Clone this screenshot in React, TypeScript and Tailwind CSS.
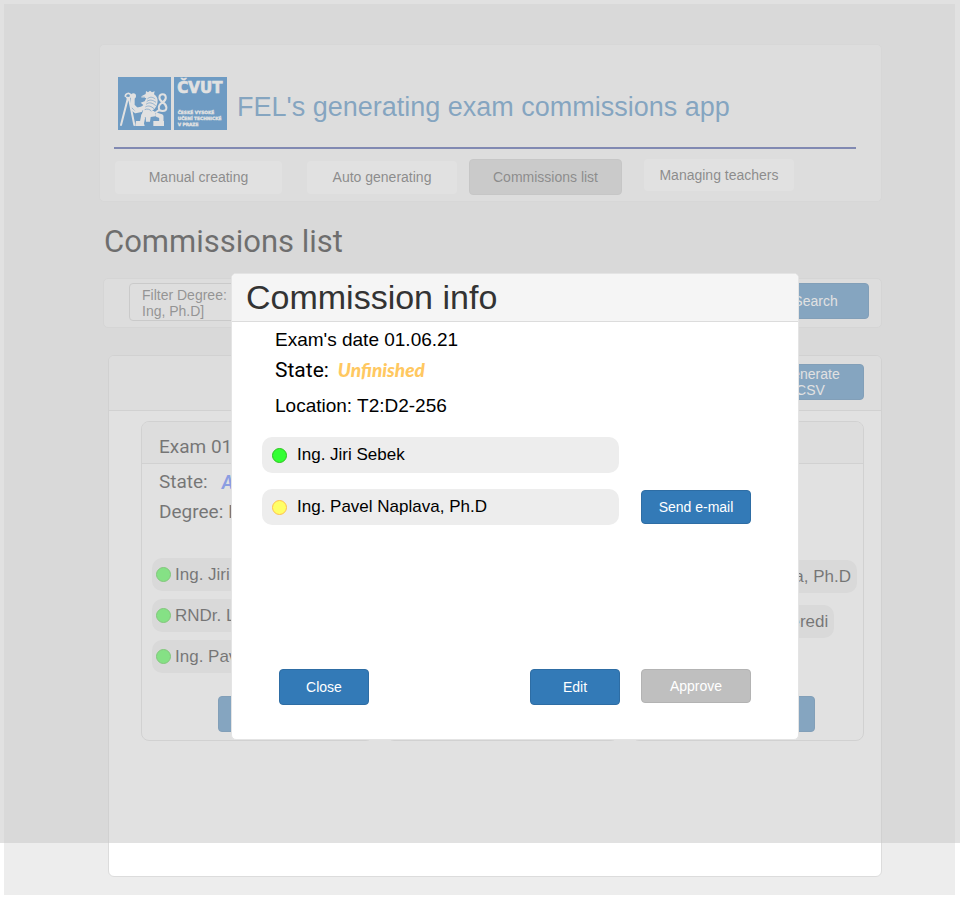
import React from "react";

const sans = "font-['Liberation_Sans',Arial,sans-serif]";
const roboto = "font-[Roboto,sans-serif]";
const blueButton = "rounded-[4px] border border-[#2e6da4] bg-[#337ab7] text-[14px] leading-[16px] text-white";

type Person = { name: string; ready: boolean };

function Dot({ ready }: { ready: boolean }) {
  return (
    <span
      className={`size-[15px] shrink-0 rounded-full border ${
        ready ? "border-[#2cc41e] bg-[#33ff33]" : "border-[#ffc04d] bg-[#ffff66]"
      }`}
    />
  );
}

function Logo() {
  return (
    <svg viewBox="0 0 327 159" className="h-[53px] w-[109px] shrink-0" role="img" aria-label="ČVUT">
      <rect width="159" height="159" fill="#0065bd" />
      <rect x="168" width="159" height="159" fill="#0065bd" />
      <g fill="none" stroke="#fff" strokeLinecap="round" strokeLinejoin="round">
        <path d="M30 62L9 144M33 64l16 80" strokeWidth="6" />
        <path d="M22 58c0-10 14-12 16-3 1 7-8 10-12 6" strokeWidth="5" />
        <path d="M44 62v24l12 12 20-4" strokeWidth="12" />
        <path d="M42 98l10 8 18-4" strokeWidth="6" />
        <path d="M134 76c-15-9-11-24 0-24s14 15 0 24c-16 9-15 26 0 26s15-17 0-26M124 98l-10 8" strokeWidth="6" />
        <path d="M90 110l-14 6-4 20M84 112l20-4M118 114l12 4v16" strokeWidth="13" />
      </g>
      <g fill="#fff">
        <circle cx="46" cy="57" r="8" />
        <path d="M70 58l13-7 1-9 6 4 6-5 6 5 8-3-2 9c9 6 13 16 10 27-3 13-10 20-22 27l-8 13-18-3 6-18-9-6 9-8-8-7 12-4 5-10-15-1z" />
        <path d="M54 132h22l4 15H52zM82 104h30v14l-14 2-2 14H84zM106 132h32v15h-32z" />
      </g>
      <g fill="none" stroke="#0065bd" strokeWidth="2">
        <path d="M88 66c8-8 16-6 24 0M86 74c9-8 18-5 28 2M84 82c10-8 20-4 29 4M82 90c10-6 18-2 26 5M80 98c8-4 15-1 20 4M69 60l12 1" />
      </g>
      <g fill="#fff" fontWeight="700" fontFamily="DejaVu Sans, sans-serif" stroke="#fff">
        <text x="178" y="48" fontSize="45" strokeWidth="2">ČVUT</text>
        <g fontSize="13" strokeWidth="1">
          <text x="179" y="112">ČESKÉ VYSOKÉ</text>
          <text x="179" y="129">UČENÍ TECHNICKÉ</text>
          <text x="179" y="147">V PRAZE</text>
        </g>
      </g>
    </svg>
  );
}

function ExamCard({
  date,
  degree,
  people,
  roomy = false,
  children,
}: {
  date: string;
  degree?: string;
  people: Person[];
  roomy?: boolean;
  children: React.ReactNode;
}) {
  return (
    <article className="flex h-80 min-w-0 flex-col rounded-[8px] border border-[#dcdcdc] bg-white text-[#111]">
      <h3 className={`h-[42px] rounded-t-[7px] border-b border-[#dcdcdc] bg-[#f5f5f5] px-[17px] pt-[10px] text-[19px] leading-[30px] ${roboto}`}>
        Exam {date}
      </h3>
      <div className={`h-16 px-[17px] pt-[3px] text-[19px] leading-[30px] ${roboto}`}>
        <p className="flex gap-[14px]">
          State: <strong className="font-[Lato,sans-serif] text-[18px] font-black text-[#4169ff] italic">Approved</strong>
        </p>
        {degree && <p>Degree: {degree}</p>}
      </div>
      <ul className={`flex flex-col items-start ${roomy ? "mt-8 gap-3 px-[6px]" : "mt-[30px] gap-2 px-[10px]"}`}>
        {people.map((p) => (
          <li
            key={p.name}
            className={`flex h-[33px] items-center gap-1 rounded-[10px] bg-[#ededed] pl-1 text-[17px] leading-5 whitespace-nowrap ${
              roomy ? "pr-[6px]" : "pr-1"
            }`}
          >
            <Dot ready={p.ready} />
            {p.name}
          </li>
        ))}
      </ul>
      <div className="mt-auto flex justify-center pb-2">{children}</div>
    </article>
  );
}

function CommissionDialog() {
  const members: Person[] = [
    { name: "Ing. Jiri Sebek", ready: true },
    { name: "Ing. Pavel Naplava, Ph.D", ready: false },
  ];
  return (
    <section
      role="dialog"
      aria-labelledby="dialog-title"
      className="w-full max-w-[568px] self-start rounded-[5px] border border-[#e4e4e4] bg-white text-black"
    >
      <h2
        id="dialog-title"
        className="h-12 rounded-t-[4px] border-b border-[#dcdcdc] bg-[#f5f5f5] pl-[14px] text-[34px] leading-[47px] text-[#333]"
      >
        Commission info
      </h2>
      <div className="px-[30px]">
        <div className="px-[13px] pt-[3px] text-[19px] leading-[30px]">
          <p>Exam's date 01.06.21</p>
          <p className={`flex items-center gap-[9px] text-[21px] ${roboto}`}>
            State: <strong className="font-[Lato,sans-serif] text-[19px] font-black text-[#ffc861] italic">Unfinished</strong>
          </p>
          <p className="pt-[6px]">Location: T2:D2-256</p>
        </div>
        <ul className="mt-4 flex flex-col gap-4">
          {members.map((m) => (
            <li key={m.name} className="flex items-center gap-[22px]">
              <div className="flex h-9 w-[357px] items-center gap-[10px] rounded-[10px] bg-[#ededed] px-[10px] text-[17px] leading-5">
                <Dot ready={m.ready} />
                {m.name}
              </div>
              {!m.ready && <button className={`h-[34px] w-[110px] ${blueButton}`}>Send e-mail</button>}
            </li>
          ))}
        </ul>
      </div>
      <div className="mt-36 flex items-start pr-[47px] pb-[34px] pl-[47px]">
        <button className={`h-9 w-[90px] ${blueButton}`}>Close</button>
        <button className={`mr-[21px] ml-auto h-9 w-[90px] ${blueButton}`}>Edit</button>
        <button className="h-[34px] w-[110px] rounded-[4px] border border-[#b3b3b3] bg-[#bfbfbf] text-[14px] leading-4 text-white">
          Approve
        </button>
      </div>
    </section>
  );
}

export default function App() {
  const tab = "rounded-[4px] text-[14px] leading-4 text-[#444]";
  return (
    <div className={`relative min-h-screen bg-white pt-1 pr-[5px] pb-[5px] pl-1 ${sans}`}>
      <main className="bg-[#ededed] pt-10 pr-[73px] pb-[18px] pl-[95px]">
        <header className="rounded-[5px] border border-[#e8e8e8] bg-[#f7f7f7] pt-8 pr-[25px] pb-[6px] pl-[14px]">
          <div className="flex items-center gap-[10px] pl-1">
            <Logo />
            <h1 className="pt-[6px] text-[27px] leading-8 text-[#337ab7]">FEL's generating exam commissions app</h1>
          </div>
          <hr className="mt-[17px] h-[2px] border-0 bg-[#2c3c97]" />
          <nav className="mt-[10px] flex h-9 items-center pl-px">
            <button className={`mr-[25px] h-[33px] w-[167px] bg-white ${tab}`}>Manual creating</button>
            <button className={`mr-3 h-[33px] w-[150px] bg-white ${tab}`}>Auto generating</button>
            <button className={`mr-[22px] h-9 w-[153px] border border-[#c4c4c4] bg-[#cdcdcd] ${tab}`}>Commissions list</button>
            <button className={`h-8 w-[150px] self-start bg-white ${tab}`}>Managing teachers</button>
          </nav>
        </header>

        <h2 className={`mt-5 mb-4 pl-[5px] text-[31px] leading-10 text-black ${roboto}`}>Commissions list</h2>

        <form className="ml-1 flex items-start justify-between rounded-[5px] border border-[#e4e4e4] bg-[#f6f6f6] pt-1 pr-3 pb-[6px] pl-[25px]">
          <textarea
            aria-label="Filter degree"
            readOnly
            rows={2}
            className="h-[38px] w-40 resize-none overflow-hidden rounded-[4px] border border-[#ccc] bg-[#f9f9f9] px-3 pt-[3px] text-[14px] leading-4 text-[#555]"
            value={"Filter Degree: [Bc,\nIng, Ph.D]"}
          />
          <button type="button" className={`h-9 w-[107px] ${blueButton}`}>Search</button>
        </form>

        <section className="mt-[27px] ml-[9px] rounded-[6px] border border-[#dcdcdc] bg-white">
          <div className="flex h-[55px] items-start justify-end rounded-t-[5px] border-b border-[#dcdcdc] bg-[#f5f5f5] pt-2 pr-[17px]">
            <button className={`h-9 w-[107px] px-4 ${blueButton}`}>Generate CSV</button>
          </div>
          <div className="grid grid-cols-3 gap-3 pt-[10px] pr-[17px] pb-[135px] pl-8">
            <ExamCard
              date="01.06.21"
              degree="Ing"
              people={[
                { name: "Ing. Jiri Sebek", ready: true },
                { name: "RNDr. L. Zoubek", ready: true },
                { name: "Ing. Pavel Naplava", ready: true },
              ]}
            >
              <button className={`h-9 w-20 ${blueButton}`}>Info</button>
            </ExamCard>
            <ExamCard date="01.06.21" people={[{ name: "Ing. Jiri Sebek", ready: true }]}>
              <button className={`h-9 w-20 ${blueButton}`}>Info</button>
            </ExamCard>
            <ExamCard
              date="01.06.21"
              roomy
              people={[
                { name: "Ing. Pavel Naplava, Ph.D", ready: true },
                { name: "RNDr. Ladislav Seredi", ready: true },
              ]}
            >
              <button className={`h-9 w-[134px] ${blueButton}`}>Info</button>
            </ExamCard>
          </div>
        </section>
      </main>

      <div className="absolute inset-x-0 top-0 flex h-[843px] justify-center bg-[rgba(200,200,200,0.55)] pt-[273px] pl-[70px]">
        <CommissionDialog />
      </div>
    </div>
  );
}
